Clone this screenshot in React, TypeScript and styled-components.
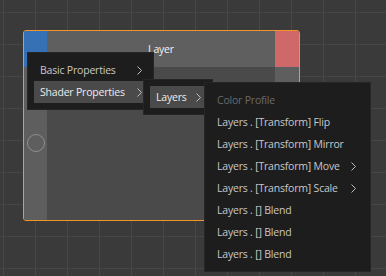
import styled, { createGlobalStyle } from "styled-components";

const GlobalStyle = createGlobalStyle`
  html, body {
    margin: 0;
    padding: 0;
    background: #3a3a3a;
  }
  body {
    font-family: "Open Sans", "Noto Sans", sans-serif;
  }
`;

const Canvas = styled.div`
  position: relative;
  width: 386px;
  height: 276px;
  overflow: hidden;
  background-color: #3a3a3a;
  background-image: linear-gradient(to right, #474747 1px, transparent 1px),
    linear-gradient(to bottom, #474747 1px, transparent 1px);
  background-size: 32px 32px;
  background-position: 3px 12px;
`;

const Node = styled.div`
  position: absolute;
  left: 23px;
  top: 30px;
  width: 275px;
  height: 189px;
  border: 1px solid #f0952e;
  border-radius: 3px;
  overflow: hidden;
  display: grid;
  grid-template-columns: 23px 1fr 24px;
  grid-template-rows: 36px 1fr;
  background: #4a4a4a;
`;

const Cell = styled.div<{ $bg: string }>`
  background: ${(p) => p.$bg};
`;

const Title = styled.div`
  background: #5f5f5f;
  color: #f2f2f2;
  font-size: 10.5px;
  letter-spacing: -0.2px;
  display: flex;
  align-items: center;
  justify-content: center;
`;

const Side = styled.div`
  background: #5e5e5e;
  display: flex;
  flex-direction: column;
  align-items: center;
  padding-top: 67px;
`;

const Port = styled.div`
  width: 16px;
  height: 16px;
  border: 1px solid #8e8e8e;
  border-radius: 50%;
`;

const Menu = styled.div<{ $x: number; $y: number; $w: number }>`
  position: absolute;
  left: ${(p) => p.$x}px;
  top: ${(p) => p.$y}px;
  width: ${(p) => p.$w}px;
  box-sizing: border-box;
  padding: 6px;
  background: #1d1d1d;
  border: 1px solid #262626;
  display: flex;
  flex-direction: column;
`;

const Item = styled.div<{ $active?: boolean; $disabled?: boolean; $tail?: number }>`
  height: 22px;
  display: flex;
  align-items: center;
  justify-content: space-between;
  padding: 0 ${(p) => p.$tail ?? 5}px 0 6px;
  font-size: 10.5px;
  letter-spacing: -0.2px;
  white-space: nowrap;
  background: ${(p) => (p.$active ? "#4a4a4a" : "transparent")};
  color: ${(p) => (p.$disabled ? "#6a6a6a" : p.$active ? "#ececec" : "#c8c8c8")};
`;

const Chevron = styled.svg`
  width: 5px;
  height: 9px;
  margin-left: 8px;
  flex-shrink: 0;
`;

function Arrow() {
  return (
    <Chevron viewBox="0 0 5 9">
      <path d="M0.5 0.5 L4.5 4.5 L0.5 8.5" fill="none" stroke="#bdbdbd" strokeWidth="1" />
    </Chevron>
  );
}

const layerItems: { label: string; sub?: boolean }[] = [
  { label: "Layers . [Transform] Flip" },
  { label: "Layers . [Transform] Mirror" },
  { label: "Layers . [Transform] Move", sub: true },
  { label: "Layers . [Transform] Scale", sub: true },
  { label: "Layers . [] Blend" },
  { label: "Layers . [] Blend" },
  { label: "Layers . [] Blend" },
];

export default function App() {
  return (
    <>
      <GlobalStyle />
      <Canvas>
        <Node>
          <Cell $bg="#3571b4" />
          <Title>Layer</Title>
          <Cell $bg="#cf6868" />
          <Side>
            <Port />
          </Side>
          <Cell $bg="#4a4a4a" />
          <Cell $bg="#5e5e5e" />
        </Node>

        <Menu $x={27} $y={52} $w={127}>
          <Item>
            Basic Properties <Arrow />
          </Item>
          <Item $active>
            Shader Properties <Arrow />
          </Item>
        </Menu>

        <Menu $x={143} $y={79} $w={70}>
          <Item $active>
            Layers <Arrow />
          </Item>
        </Menu>

        <Menu $x={204} $y={82} $w={167}>
          <Item $disabled>Color Profile</Item>
          {layerItems.map((it, i) => (
            <Item key={i} $tail={8}>
              {it.label}
              {it.sub && <Arrow />}
            </Item>
          ))}
        </Menu>
      </Canvas>
    </>
  );
}
